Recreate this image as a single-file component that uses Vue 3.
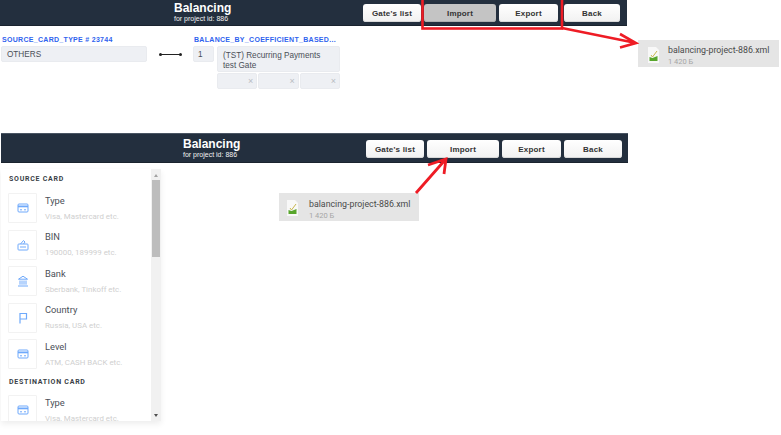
<script setup>
const buttons = [
  { label: "Gate's list", width: 58 },
  { label: 'Import', width: 72 },
  { label: 'Export', width: 59 },
  { label: 'Back', width: 56 }
]
const sourceItems = [
  { icon: 'card', title: 'Type', hint: 'Visa, Mastercard etc.' },
  { icon: 'bin', title: 'BIN', hint: '190000, 189999 etc.' },
  { icon: 'bank', title: 'Bank', hint: 'Sberbank, Tinkoff etc.' },
  { icon: 'flag', title: 'Country', hint: 'Russia, USA etc.' },
  { icon: 'card', title: 'Level', hint: 'ATM, CASH BACK etc.' }
]
const destItems = [{ icon: 'card', title: 'Type', hint: 'Visa, Mastercard etc.' }]
</script>

<template>
  <div class="page">
    <section class="shot-top">
      <header class="bar bar-a">
        <div class="heading">
          <div class="title">Balancing</div>
          <div class="sub">for project id: 886</div>
        </div>
        <div class="btns btns-a">
          <button v-for="(b, i) in buttons" :key="b.label" class="btn" :class="{ active: i === 1 }" :style="{ width: b.width + 'px' }">{{ b.label }}</button>
        </div>
      </header>
      <div class="rule">
        <div class="col-source">
          <div class="label">SOURCE_CARD_TYPE # 23744</div>
          <div class="field source-field">OTHERS</div>
        </div>
        <div class="link"></div>
        <div class="col-balance">
          <div class="label">BALANCE_BY_COEFFICIENT_BASED...</div>
          <div class="gate-row">
            <div class="field weight">1</div>
            <div class="gate-col">
              <div class="field gate">(TST) Recurring Payments test Gate</div>
              <div class="mini-row">
                <div v-for="n in 3" :key="n" class="field mini">×</div>
              </div>
            </div>
          </div>
        </div>
      </div>
    </section>

    <section class="shot-bottom">
      <header class="bar bar-b">
        <div class="heading">
          <div class="title">Balancing</div>
          <div class="sub">for project id: 886</div>
        </div>
        <div class="btns btns-b">
          <button v-for="b in buttons" :key="b.label" class="btn" :style="{ width: (b.label === 'Back' ? 58 : b.width) + 'px' }">{{ b.label }}</button>
        </div>
      </header>
      <aside class="panel">
        <div class="list">
          <h4 class="group first">SOURCE CARD</h4>
          <div v-for="it in sourceItems" :key="it.title" class="item">
            <div class="tile">
              <svg width="12" height="12" viewBox="0 0 12 12" fill="none" stroke="#6ea9fb" stroke-width="1">
                <template v-if="it.icon === 'card'">
                  <rect x="1" y="2" width="10" height="8" rx="1" />
                  <path d="M1 4.4h10" stroke-width="1.8" />
                  <path d="M3 7.8h2M7 7.8h2" />
                </template>
                <template v-else-if="it.icon === 'bin'">
                  <rect x="1" y="5" width="10" height="6" rx="0.8" />
                  <path d="M3.5 5l3-3.5 1.5 1.5L6.5 5M3 8h6" />
                </template>
                <template v-else-if="it.icon === 'bank'">
                  <path d="M1.5 4.2L6 1.2l4.5 3zM1 11h10M3 5.5v4.2M5 5.5v4.2M7 5.5v4.2M9 5.5v4.2" />
                </template>
                <template v-else>
                  <path d="M3 11.5V1.5h6.5v5.5H3" stroke-width="1.2" />
                </template>
              </svg>
            </div>
            <div class="item-text">
              <div class="item-title">{{ it.title }}</div>
              <div class="item-hint">{{ it.hint }}</div>
            </div>
          </div>
          <h4 class="group">DESTINATION CARD</h4>
          <div v-for="it in destItems" :key="it.title" class="item">
            <div class="tile">
              <svg width="12" height="12" viewBox="0 0 12 12" fill="none" stroke="#6ea9fb" stroke-width="1">
                <rect x="1" y="2" width="10" height="8" rx="1" />
                <path d="M1 4.4h10" stroke-width="1.8" />
                <path d="M3 7.8h2M7 7.8h2" />
              </svg>
            </div>
            <div class="item-text">
              <div class="item-title">{{ it.title }}</div>
              <div class="item-hint">{{ it.hint }}</div>
            </div>
          </div>
        </div>
        <div class="scrollbar">
          <span class="arrow up"></span>
          <span class="thumb"></span>
          <span class="arrow down"></span>
        </div>
      </aside>
    </section>

    <!-- annotations laid over the two screenshots -->
    <div class="chip chip-top">
      <svg class="file" width="11" height="16" viewBox="0 0 11 16">
        <path d="M0 0h8l3 3v13H0z" fill="#f8f8f8" />
        <path d="M1.5 14V10l3 1 5-2v5z" fill="#58a62c" />
        <path d="M3 8l1.5 2L9 4" fill="none" stroke="#c9b74e" stroke-width="1" />
      </svg>
      <div>
        <div class="chip-name">balancing-project-886.xml</div>
        <div class="chip-size">1 420 Б</div>
      </div>
    </div>
    <div class="chip chip-bottom">
      <svg class="file" width="11" height="16" viewBox="0 0 11 16">
        <path d="M0 0h8l3 3v13H0z" fill="#f8f8f8" />
        <path d="M1.5 14V10l3 1 5-2v5z" fill="#58a62c" />
        <path d="M3 8l1.5 2L9 4" fill="none" stroke="#c9b74e" stroke-width="1" />
      </svg>
      <div>
        <div class="chip-name">balancing-project-886.xml</div>
        <div class="chip-size">1 420 Б</div>
      </div>
    </div>
    <svg class="overlay" width="781" height="435" viewBox="0 0 781 435" fill="none" stroke="#ee1c25" stroke-width="2.6">
      <rect x="422.5" y="-3" width="139.5" height="31.5" />
      <path d="M562 28L636 43M620 34l16 9-16 4.5" />
      <path d="M416 193L445 160M428 165l18-6-2 15" stroke-width="2.8" />
    </svg>
  </div>
</template>

<style>
html, body { margin: 0; background: #fff; }
</style>

<style scoped>
.page {
  position: relative;
  width: 781px;
  height: 435px;
  overflow: hidden;
  background: #fff;
  font-family: "Liberation Sans", Arial, sans-serif;
}
.bar {
  box-sizing: border-box;
  display: flex;
  align-items: center;
  background: #232f3e;
  color: #fff;
}
.bar-a { width: 627px; height: 26px; padding-left: 174px; border-bottom: 1px solid #1a232e; }
.bar-b { width: 627px; height: 30px; margin-left: 1px; padding-left: 182px; border-top: 1px solid #4a5563; border-bottom: 1px solid #1a232e; }
.heading { width: 100px; }
.title { font-size: 12px; font-weight: 700; line-height: 13px; }
.bar-a .heading { margin-top: -1px; }
.sub { font-size: 7px; line-height: 8px; color: #f2f2f2; }
.btns { display: flex; gap: 3px; }
.btns-a { margin-left: 89px; }
.btns-b { margin-left: 83px; margin-top: 2px; }
.btn {
  height: 18px;
  padding: 1px 0 0;
  border: 0;
  border-radius: 3px;
  background: linear-gradient(#fff, #f1f1f1);
  box-shadow: inset 0 -1px 0 #d8d8d8;
  color: #333;
  font: 700 8px/17px "Liberation Sans", Arial, sans-serif;
  letter-spacing: 0.2px;
}
.btns-a .btn:last-child { margin-left: 3px; }
.btn.active { background: #c4c4c4; box-shadow: inset 0 -1px 0 #adadad; }

.rule { display: flex; height: 107px; padding: 9px 0 0 1px; box-sizing: border-box; }
.col-source { width: 146px; }
.col-balance { width: 148px; }
.label {
  height: 11px;
  padding-left: 1px;
  color: #2f63ee;
  font-size: 7px;
  font-weight: 700;
  line-height: 9px;
  letter-spacing: 0.3px;
  white-space: nowrap;
}
.field {
  box-sizing: border-box;
  border-radius: 2px;
  background: #eef0f4;
  border: 1px solid #e9ebef;
  color: #4a4f57;
  font-size: 8.2px;
  line-height: 10px;
}
.source-field { height: 16px; padding: 3px 5px; }
.link { position: relative; width: 21px; height: 1px; margin: 19px 12px 0 13px; background: #222; }
.link::before, .link::after {
  content: "";
  position: absolute;
  top: -1px;
  width: 3px;
  height: 3px;
  border-radius: 50%;
  background: #222;
}
.link::before { left: -1px; }
.link::after { right: -1px; }
.gate-row { display: flex; gap: 3px; }
.weight { width: 21px; height: 16px; padding: 3px 4px; }
.gate-col { width: 123px; }
.gate { height: 26px; padding: 4px 5px 0; }
.mini-row { display: flex; gap: 1px; margin-top: 1px; }
.mini { flex: 1; height: 16px; padding-right: 3px; text-align: right; color: #b8bcc2; line-height: 14px; font-size: 9px; }

.shot-bottom { height: 302px; }
.panel {
  display: flex;
  width: 160px;
  height: 252px;
  margin: 6px 0 0 1px;
  overflow: hidden;
  box-shadow: 0 3px 6px rgba(0, 0, 0, 0.07);
  font-family: Roboto, "Liberation Sans", sans-serif;
}
.list { flex: 1; min-width: 0; padding-left: 7px; overflow: hidden; }
.group {
  height: 9px;
  color: #3a3f47;
  font-size: 7px;
  font-weight: 700;
  line-height: 9px;
  letter-spacing: 0.75px;
}
.group.first { margin: 6px 0 9px 1px; }
.group:not(.first) { margin: 8.5px 0 8.5px 1px; }
.item { display: flex; gap: 8px; margin-bottom: 6.5px; }
.tile {
  box-sizing: border-box;
  display: flex;
  flex: none;
  align-items: center;
  justify-content: center;
  width: 29px;
  height: 30px;
  border: 1px solid #f2f2f2;
  border-radius: 1px;
}
.item-title { margin-top: 0.5px; color: #4b4f58; font-size: 9.3px; line-height: 13px; }
.item-hint { margin-top: 4px; color: #cfcfcf; font-size: 7.9px; line-height: 11px; white-space: nowrap; }
.scrollbar {
  display: flex;
  flex: none;
  flex-direction: column;
  align-items: center;
  width: 10px;
  background: #f1f1f1;
}
.arrow { flex: none; width: 0; height: 0; border-left: 2.5px solid transparent; border-right: 2.5px solid transparent; }
.arrow.up { margin-top: 5px; border-bottom: 3px solid #a3a3a3; }
.arrow.down { margin-top: auto; margin-bottom: 4px; border-top: 3px solid #505050; }
.thumb { width: 8px; height: 77px; margin-top: 3px; background: #bdbdbd; }

.chip {
  position: absolute;
  box-sizing: border-box;
  display: flex;
  align-items: center;
  background: #e5e5e5;
  font-family: Roboto, "Liberation Sans", sans-serif;
}
.chip-top { left: 638px; top: 40px; width: 141px; height: 27px; padding-left: 10px; gap: 9px; }
.chip-bottom { left: 279px; top: 193px; width: 140px; height: 28px; padding-left: 8px; gap: 11px; }
.file { flex: none; margin-top: 2px; }
.chip-name { margin-top: 3px; color: #4a4a4a; font-size: 8.8px; line-height: 12px; white-space: nowrap; }
.chip-size { margin-top: 1px; color: #a5a5a5; font-size: 7.5px; line-height: 9px; }
.overlay { position: absolute; left: 0; top: 0; pointer-events: none; }
</style>
